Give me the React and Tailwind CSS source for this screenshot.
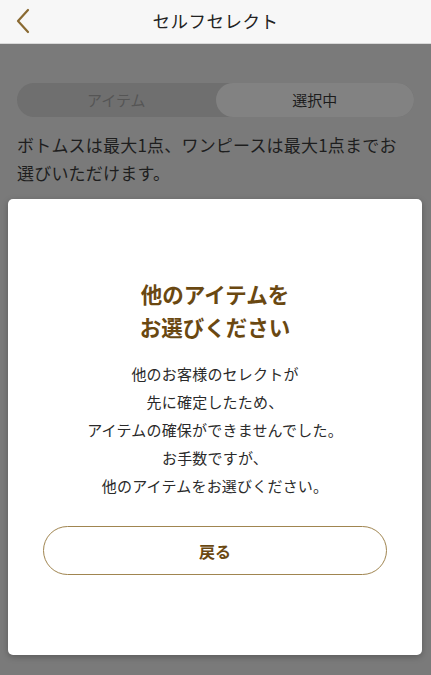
export default function App() {
  return (
    <div
      className="relative w-[431px] h-[675px] overflow-hidden bg-[#7a7a7a] flex flex-col"
      style={{ fontFamily: '"Noto Sans CJK JP", "Noto Sans", sans-serif' }}
    >
      <header className="relative h-[44px] shrink-0 bg-[#f7f7f7] border-b border-[#d9d9d9] flex items-center justify-center">
        <button className="absolute left-[12px] top-[6px] w-[22px] h-[30px] flex items-center justify-center">
          <svg width="16" height="26" viewBox="0 0 16 26" fill="none">
            <polyline
              points="13,2 3,13 13,24"
              stroke="#8a6a32"
              strokeWidth="2.2"
              strokeLinecap="round"
              strokeLinejoin="round"
            />
          </svg>
        </button>
        <h1 className="text-[17.5px] text-[#222] tracking-[0.5px]">セルフセレクト</h1>
      </header>

      <div className="flex-1 px-[17px] pt-[39px]">
        <div className="flex h-[34px] rounded-full bg-[#6f6f6f]">
          <div className="flex-1 flex items-center justify-center text-[15px] text-[#555]">
            アイテム
          </div>
          <div className="flex-1 flex items-center justify-center rounded-full bg-[#828282] text-[15px] text-[#1c1c1c]">
            選択中
          </div>
        </div>
        <p className="mt-[14px] text-[17px] leading-[28px] text-[#1e1e1e] tracking-[0.2px]">
          ボトムスは最大1点、ワンピースは最大1点までお
          <br />
          選びいただけます。
        </p>
      </div>

      <div className="absolute left-[8px] top-[199px] w-[414px] h-[456px] rounded-[5px] bg-white shadow-[0_2px_6px_rgba(0,0,0,0.25)] flex flex-col items-center pt-[78px]">
        <h2 className="text-[21.5px] leading-[33px] font-bold text-[#6a4811] text-center">
          他のアイテムを
          <br />
          お選びください
        </h2>
        <p className="mt-[17px] text-[15px] leading-[28px] text-[#2a2a2a] text-center tracking-[0.2px]">
          他のお客様のセレクトが
          <br />
          先に確定したため、
          <br />
          アイテムの確保ができませんでした。
          <br />
          お手数ですが、
          <br />
          他のアイテムをお選びください。
        </p>
        <button className="mt-[26px] w-[344px] h-[49px] rounded-full border border-[#a08550] text-[16px] font-bold text-[#6a4811]">
          戻る
        </button>
      </div>
    </div>
  );
}
